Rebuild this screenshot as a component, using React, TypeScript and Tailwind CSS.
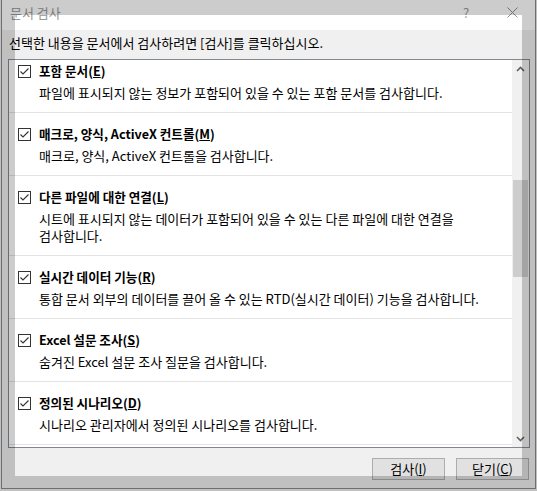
import React from "react";

const items: { t: string; k: string; d: string[] }[] = [
  { t: "포함 문서", k: "E", d: ["파일에 표시되지 않는 정보가 포함되어 있을 수 있는 포함 문서를 검사합니다."] },
  { t: "매크로, 양식, ActiveX 컨트롤", k: "M", d: ["매크로, 양식, ActiveX 컨트롤을 검사합니다."] },
  {
    t: "다른 파일에 대한 연결",
    k: "L",
    d: ["시트에 표시되지 않는 데이터가 포함되어 있을 수 있는 다른 파일에 대한 연결을", "검사합니다."],
  },
  { t: "실시간 데이터 기능", k: "R", d: ["통합 문서 외부의 데이터를 끌어 올 수 있는 RTD(실시간 데이터) 기능을 검사합니다."] },
  { t: "Excel 설문 조사", k: "S", d: ["숨겨진 Excel 설문 조사 질문을 검사합니다."] },
  { t: "정의된 시나리오", k: "D", d: ["시나리오 관리자에서 정의된 시나리오를 검사합니다."] },
];

function Check() {
  return (
    <div className="w-[13px] h-[13px] border border-[#333333] bg-white flex items-center justify-center shrink-0">
      <svg width="11" height="11" viewBox="0 0 11 11">
        <path d="M1.5 5.5 L4 8 L9.5 2.5" fill="none" stroke="#333333" strokeWidth="1.1" />
      </svg>
    </div>
  );
}

export default function App() {
  return (
    <div
      className="relative w-[537px] h-[491px] overflow-hidden bg-[#f0f0f0] px-[1px] pb-[2px] text-[13px] text-black"
      style={{ fontFamily: "'Noto Sans CJK KR', 'Noto Sans', sans-serif" }}
    >
      <div className="w-[535px] h-[489px] border-x border-b border-[#8a8a8a] flex flex-col bg-[#f0f0f0]">
        {/* title bar */}
        <div className="h-[30px] bg-white flex items-center shrink-0">
          <div className="pl-[8px] flex-1 text-[#999999] leading-[16px] -mt-[5px]">문서 검사</div>
          <div className="w-[46px] h-[30px] flex items-center justify-center text-[#999999] text-[13px] -mt-[5px]">?</div>
          <div className="w-[46px] h-[30px] flex items-center justify-center -mt-[6px]">
            <svg width="11" height="11" viewBox="0 0 11 11">
              <path d="M0.5 0.5 L10.5 10.5 M10.5 0.5 L0.5 10.5" stroke="#8f8f8f" strokeWidth="1" />
            </svg>
          </div>
        </div>
        {/* body */}
        <div className="flex-1 flex flex-col pl-[6px] pr-[5px] pt-[5px] pb-[8px]">
          <div className="leading-[16px] whitespace-nowrap pl-[1px]">
            선택한 내용을 문서에서 검사하려면 [검사]를 클릭하십시오.
          </div>
          <div className="mt-[8px] h-[389px] border border-[#828790] bg-white flex overflow-hidden">
            <div className="flex-1 overflow-hidden">
              <div className="-mt-[10px]">
                {items.map((it, i) => (
                  <div key={i} className="border-b border-[#e3e3e3] pl-[9px] pt-[13px] pb-[11px]">
                    <div className="flex items-center h-[16px]">
                      <Check />
                      <div className="ml-[8px] font-bold text-[12.6px] leading-[16px] whitespace-nowrap">
                        {it.t}(<u>{it.k}</u>)
                      </div>
                    </div>
                    <div className="mt-[5px] pl-[21px] leading-[17px] whitespace-nowrap">
                      {it.d.map((l, j) => (
                        <div key={j}>{l}</div>
                      ))}
                    </div>
                  </div>
                ))}
                <div className="h-[40px]" />
              </div>
            </div>
            {/* scrollbar */}
            <div className="w-[17px] bg-[#f0f0f0] flex flex-col shrink-0">
              <div className="h-[17px] flex items-center justify-center">
                <svg width="9" height="6" viewBox="0 0 9 6">
                  <path d="M1 5 L4.5 1.5 L8 5" fill="none" stroke="#606060" strokeWidth="1.6" />
                </svg>
              </div>
              <div className="flex-1 flex flex-col">
                <div className="h-[103px]" />
                <div className="h-[97px] mx-[1px] bg-[#cdcdcd]" />
              </div>
              <div className="h-[17px] flex items-center justify-center">
                <svg width="9" height="6" viewBox="0 0 9 6">
                  <path d="M1 1 L4.5 4.5 L8 1" fill="none" stroke="#606060" strokeWidth="1.6" />
                </svg>
              </div>
            </div>
          </div>
          <div className="mt-[10px] flex justify-end gap-[11px] pr-[1px]">
            <div className="w-[73px] h-[22px] border border-[#adadad] bg-[#e1e1e1] flex items-center justify-center leading-[16px]">
              검사(<u>I</u>)
            </div>
            <div className="w-[73px] h-[22px] border border-[#adadad] bg-[#e1e1e1] flex items-center justify-center leading-[16px]">
              닫기(<u>C</u>)
            </div>
          </div>
        </div>
      </div>
      {/* dimming overlay with spotlight hole */}
      <div className="absolute left-[15px] top-[15px] w-[507px] h-[461px] pointer-events-none shadow-[0_0_0_700px_rgba(0,0,0,0.2)]" />
    </div>
  );
}
